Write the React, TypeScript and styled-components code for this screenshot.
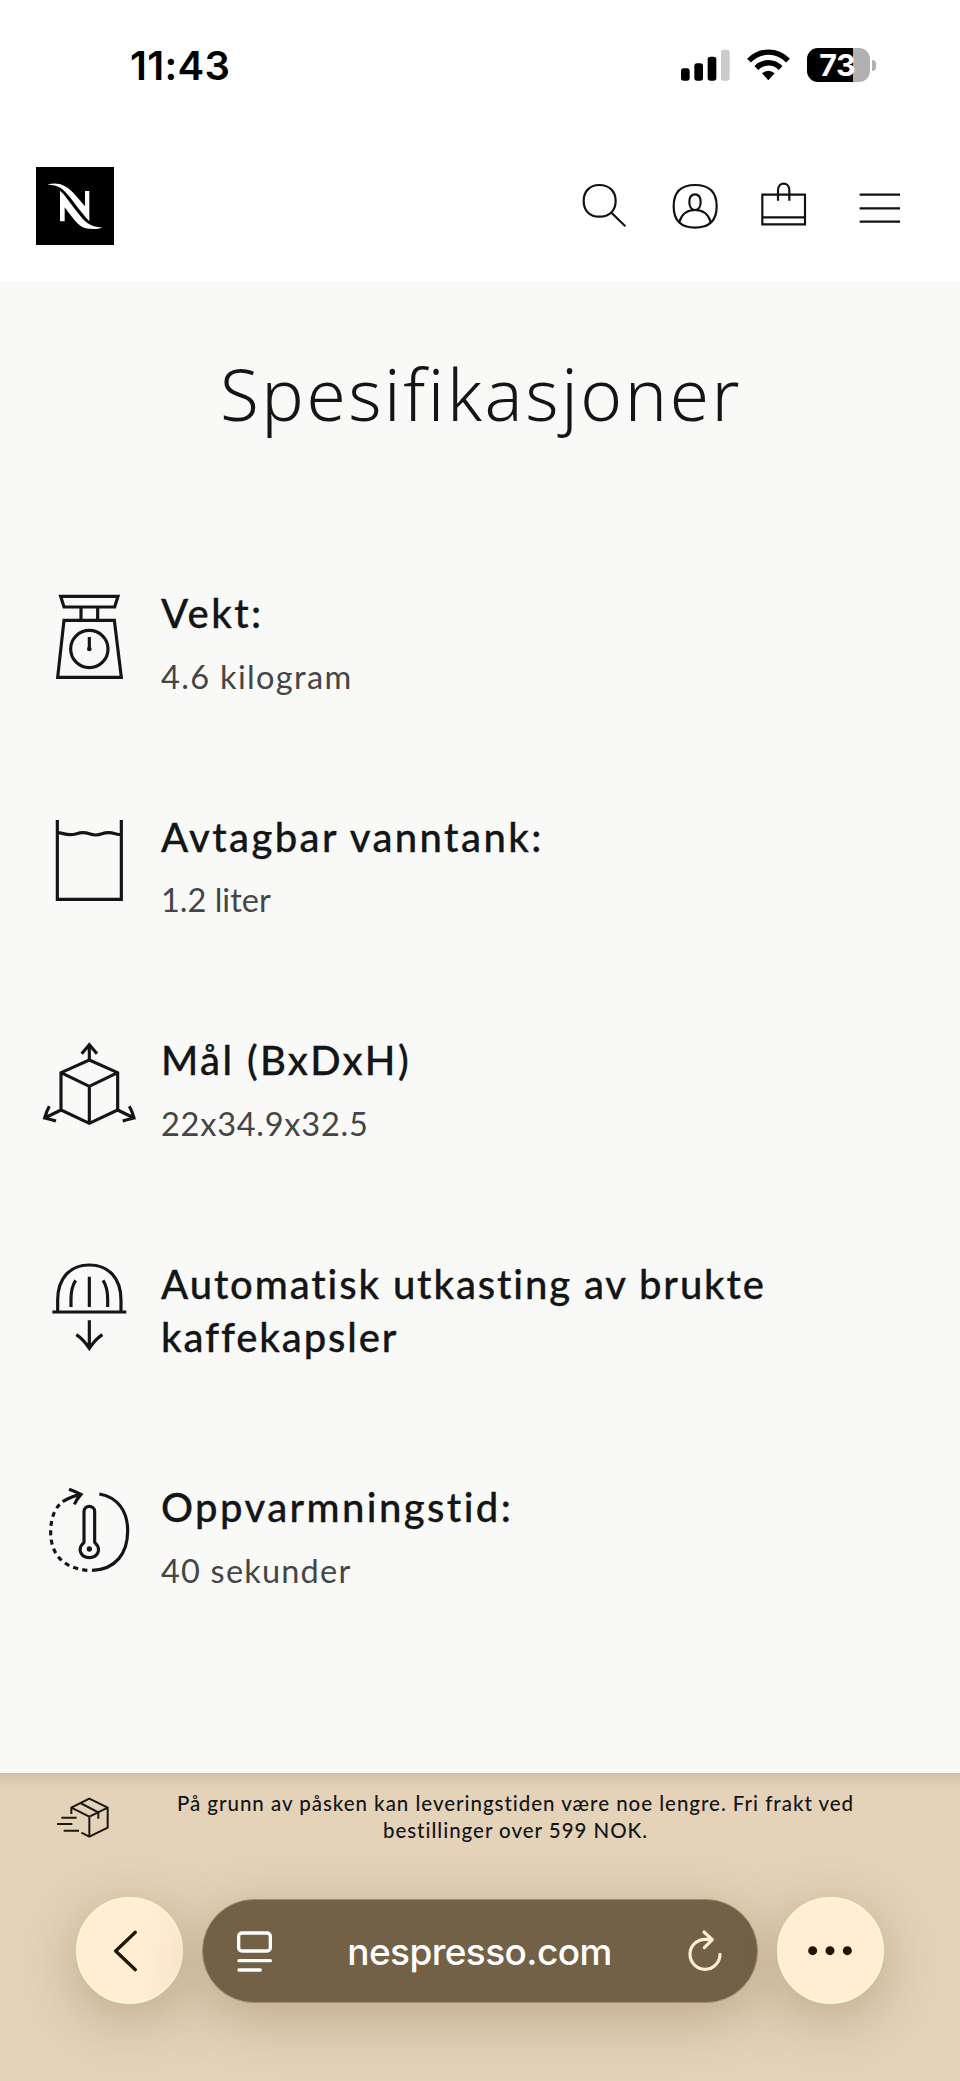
import React from "react";
import styled, { createGlobalStyle } from "styled-components";

const GlobalStyle = createGlobalStyle`
  * { box-sizing: border-box; }
  body { margin: 0; background: #fff; font-variant-ligatures: none; }
  svg { display: block; flex: none; overflow: visible; }
`;

const Page = styled.div`
  width: 960px;
  height: 2081px;
  display: flex;
  flex-direction: column;
  overflow: hidden;
  color: #141516;
  font-family: Lato, "Open Sans", sans-serif;
`;

const StatusBar = styled.div`
  height: 132px;
  flex: none;
  display: flex;
  justify-content: space-between;
  padding: 42px 84px 0 130px;
`;

const Clock = styled.span`
  color: #000;
  font: 600 40px/48px Inter, sans-serif;
  letter-spacing: 0.3px;
`;

const StatusIcons = styled.div`
  display: flex;
  align-items: flex-start;
  padding-top: 5.5px;
  height: 48px;
`;

const Wifi = styled.svg`
  margin: 0 17px 0 17px;
`;

const Battery = styled.div`
  width: 63.5px;
  height: 34px;
  border-radius: 11px;
  background: linear-gradient(90deg, #000 73.5%, #b1b1b1 73.5%);
  color: #fff;
  font: 700 30.5px/34px Inter, sans-serif;
  letter-spacing: -0.5px;
  text-align: center;
  padding-right: 2px;
`;

const BatteryCap = styled.div`
  width: 4px;
  height: 11px;
  margin: 12px 0 0 2px;
  border-radius: 0 5px 5px 0;
  background: #b1b1b1;
`;

const Header = styled.header`
  height: 149.4px;
  flex: none;
  display: flex;
  justify-content: space-between;
  align-items: flex-start;
  padding: 35px 58px 0 36px;
`;

const Main = styled.main`
  height: 1491.6px;
  flex: none;
  background: #f9f9f7;
`;

const Heading = styled.h1`
  margin: 0;
  padding-top: 68.6px;
  padding-left: 2px;
  text-align: center;
  font-family: "Noto Sans", sans-serif;
  font-size: 71px;
  line-height: 88px;
  font-weight: 300;
  letter-spacing: 2.6px;
`;

const SpecList = styled.ul`
  list-style: none;
  margin: 0;
  padding: 142px 0 0 30px;
`;

const Spec = styled.li`
  height: 223.6px;
  display: flex;
`;

const SpecText = styled.div`
  padding: 7px 0 0 11px;
  width: 640px;
`;

const SpecTitle = styled.h2<{ $track?: number }>`
  margin: 0;
  font-size: 40px;
  line-height: 53.6px;
  font-weight: 500;
  letter-spacing: ${(p) => p.$track ?? 2.4}px;
  -webkit-text-stroke: 0.3px #141516;
`;

const SpecValue = styled.p<{ $track?: number }>`
  margin: 16px 0 0;
  color: #444546;
  font-size: 32.5px;
  line-height: 40px;
  font-weight: 400;
  letter-spacing: ${(p) => p.$track ?? 1.5}px;
`;

const Footer = styled.footer`
  flex: 1;
  background: linear-gradient(180deg, #cdbda7 0, #dac9b1 6px, #e4d3b9 18px, #e4d3b9 100%);
`;

const Notice = styled.div`
  display: flex;
  padding: 17px 0 0 56px;
  height: 124.5px;
`;

const NoticeText = styled.p`
  margin: 0 0 0 29.5px;
  width: 740px;
  text-align: center;
  font-size: 20.5px;
  line-height: 27px;
  font-weight: 500;
  letter-spacing: 0.97px;
`;

const BrowserBar = styled.div`
  display: flex;
  align-items: center;
  justify-content: space-between;
  padding: 0 76px;
`;

const RoundButton = styled.button<{ $nudge?: number }>`
  width: 107px;
  height: 107px;
  padding: 0 ${(p) => p.$nudge ?? 0}px 0 0;
  display: flex;
  align-items: center;
  justify-content: center;
  border: 2px solid #fff6cf;
  border-radius: 50%;
  background: #ffedd4;
  box-shadow: 0 14px 60px rgba(105, 85, 50, 0.34);
`;

const AddressBar = styled.div`
  width: 556px;
  height: 104px;
  display: flex;
  align-items: center;
  justify-content: space-between;
  padding: 0 35px 0 34px;
  border: 1px solid #a48c68;
  border-radius: 52px;
  background: #726147;
  box-shadow: 0 14px 60px rgba(105, 85, 50, 0.34);
`;

const Address = styled.span`
  color: #fff;
  font: 500 37px/48px Inter, sans-serif;
  letter-spacing: -0.6px;
  padding: 2px 2px 0 0;
`;

const SpecIcon = ({ y = 0, children }: { y?: number; children: React.ReactNode }) => (
  <svg width="120" height="110" viewBox={`0 ${y} 360 330`} fill="none" stroke="#141516" strokeWidth="9.5">
    {children}
  </svg>
);

const ScaleIcon = () => (
  <SpecIcon>
    <path d="M92 49H264L254 81H102ZM153 81V120M203 81V120M102 121H253L274 292H83Z" />
    <circle cx="178" cy="207" r="56" />
    <path d="M178 171V206" />
    <circle cx="178" cy="207" r="7" fill="#141516" stroke="none" />
  </SpecIcon>
);

const TankIcon = () => (
  <SpecIcon y={12}>
    <path d="M82 60V298H274V60M82 98C97 98 103 104 121 104C139 104 141 98 159 98C177 98 179 105 197 105C215 105 217 98 235 98C253 98 258 104 274 104" />
  </SpecIcon>
);

const CubeIcon = () => (
  <SpecIcon y={-9}>
    <path d="M178 90L263 128V240L178 280L93 240V128ZM93 128L178 169L263 128M178 169V280M178 90V43M155 71L178 44L201 71M93 240L44 264M263 240L312 264M58 229Q50 243 44 264Q58 267 78 273M298 229Q306 243 312 264Q298 267 278 273" />
  </SpecIcon>
);

const CapsuleIcon = () => (
  <SpecIcon y={2}>
    <path d="M67 185H289M83 185V150C83 82 121 44 178 44C235 44 273 82 273 150V185M123 170V146Q123 111 137 90M178 79V170M233 170V146Q233 111 219 90M178 210V294M139 253Q161 268 178 294Q195 268 217 253" />
  </SpecIcon>
);

const HeatIcon = () => (
  <SpecIcon y={12}>
    <path d="M208 72C266 82 293 126 293 182C293 249 258 299 186 301" />
    <path d="M172 301C91 293 62 245 62 186C62 142 76 111 98 95" strokeDasharray="15 13" />
    <path d="M98 95Q126 78 153 73M117 58Q137 65 153 73Q141 86 133 103" />
    <path d="M162 217V125C162 104 194 104 194 125V217C217 238 202 263 178 263C154 263 139 238 162 217Z" />
    <circle cx="178" cy="237" r="8" fill="#141516" stroke="none" />
  </SpecIcon>
);

const Logo = () => (
  <svg width="78" height="78" viewBox="108 442 234 234">
    <path fill="#000" d="M108 442H342V676H108Z" />
    <path
      fill="#fff"
      d="M142 495C157 490 177 490 192 498C212 508 223 522 255 560V514H268V605L258 594C241 575 225 552 210 533C189 506 176 495 142 495ZM180 513L191 524L232 578C252 604 267 622 308 624C290 629 263 630 247 622C228 611 218 594 194 563V605H180Z"
    />
  </svg>
);

const HeaderIcons = () => (
  <svg width="322" height="78" viewBox="300 442 966 234" fill="none" stroke="#111" strokeWidth="6.5">
    <path d="M358 496C388 496 407 515 407 544C407 573 388 591 358 591C329 591 311 573 311 544C311 515 329 496 358 496ZM392 577L436 620" />
    <path d="M645 496C688 496 710 518 710 560C710 603 688 624 645 624C603 624 581 603 581 560C581 518 603 496 645 496Z" />
    <path d="M645 524C658 524 662 535 662 547C662 560 656 571 645 571C634 571 628 560 628 547C628 535 632 524 645 524ZM598 607C605 583 622 571 645 571C668 571 685 583 692 607" />
    <path d="M847 525H975V614H847ZM847 593H975M894 543V512C894 485 928 485 928 512V543" />
    <path d="M1139 525H1260M1139 566H1260M1139 606H1260" />
  </svg>
);

const ParcelIcon = () => (
  <svg width="60" height="54" viewBox="168 120 180 162" fill="none" stroke="#1b1814" strokeWidth="6">
    <path d="M214 192V173L268 146L323 173V233L268 260L244 248M214 173L268 200L323 173M268 200V260M241 159L295 187V206M184 203H230M171 222H217M191 242H237" />
  </svg>
);

export default function App() {
  return (
    <Page>
      <GlobalStyle />
      <StatusBar>
        <Clock>11:43</Clock>
        <StatusIcons>
          <svg width="49" height="34" viewBox="0 0 147 102">
            <rect x="0" y="61" width="26" height="37" rx="8" />
            <rect x="40" y="46" width="26" height="52" rx="8" />
            <rect x="80" y="26" width="26" height="72" rx="8" />
            <rect x="120" y="5" width="26" height="93" rx="8" fill="#cbcbcb" />
          </svg>
          <Wifi width="43" height="34" viewBox="801 82 129 102" fill="none" stroke="#000" strokeWidth="16">
            <path d="M807 120C840 86 891 86 924 120M829 142C850 121 881 121 902 142" />
            <path d="M846 158Q865 143 884 158L865 179Z" fill="#000" stroke="none" />
          </Wifi>
          <Battery>73</Battery>
          <BatteryCap />
        </StatusIcons>
      </StatusBar>
      <Header>
        <Logo />
        <HeaderIcons />
      </Header>
      <Main>
        <Heading>Spesifikasjoner</Heading>
        <SpecList>
          <Spec>
            <ScaleIcon />
            <SpecText>
              <SpecTitle>Vekt:</SpecTitle>
              <SpecValue $track={1.35}>4.6 kilogram</SpecValue>
            </SpecText>
          </Spec>
          <Spec>
            <TankIcon />
            <SpecText>
              <SpecTitle>Avtagbar vanntank:</SpecTitle>
              <SpecValue $track={0}>1.2 liter</SpecValue>
            </SpecText>
          </Spec>
          <Spec>
            <CubeIcon />
            <SpecText>
              <SpecTitle>Mål (BxDxH)</SpecTitle>
              <SpecValue $track={0.75}>22x34.9x32.5</SpecValue>
            </SpecText>
          </Spec>
          <Spec>
            <CapsuleIcon />
            <SpecText>
              <SpecTitle $track={1.87}>Automatisk utkasting av brukte kaffekapsler</SpecTitle>
            </SpecText>
          </Spec>
          <Spec>
            <HeatIcon />
            <SpecText>
              <SpecTitle>Oppvarmningstid:</SpecTitle>
              <SpecValue $track={1.2}>40 sekunder</SpecValue>
            </SpecText>
          </Spec>
        </SpecList>
      </Main>
      <Footer>
        <Notice>
          <ParcelIcon />
          <NoticeText>
            På grunn av påsken kan leveringstiden være noe lengre. Fri frakt ved
            <br />
            bestillinger over 599 NOK.
          </NoticeText>
        </Notice>
        <BrowserBar>
          <RoundButton aria-label="Tilbake" $nudge={7}>
            <svg width="24" height="42" viewBox="343 541 72 126" fill="none" stroke="#241300" strokeWidth="10" strokeLinecap="round" strokeLinejoin="round">
              <path d="M407 548L348 604L407 660" />
            </svg>
          </RoundButton>
          <AddressBar>
            <svg width="36" height="42" viewBox="711 542 108 126" fill="none" stroke="#fff" strokeWidth="10" strokeLinecap="round">
              <rect x="716" y="551" width="95" height="54" rx="10" />
              <path d="M717 634H811M717 662H781" />
            </svg>
            <Address>nespresso.com</Address>
            <svg width="34" height="42" viewBox="626 538 102 126" fill="none" stroke="#ffedd4" strokeWidth="9.5" strokeLinecap="round" strokeLinejoin="round">
              <path d="M722 611A45 45 0 1 1 677 566H698M674 544L699 567L675 591" />
            </svg>
          </AddressBar>
          <RoundButton aria-label="Mer" $nudge={2}>
            <svg width="44" height="10" viewBox="983 590 132 30" fill="#241300">
              <circle cx="997" cy="604" r="13.5" />
              <circle cx="1049" cy="604" r="13.5" />
              <circle cx="1101" cy="604" r="13.5" />
            </svg>
          </RoundButton>
        </BrowserBar>
      </Footer>
    </Page>
  );
}
